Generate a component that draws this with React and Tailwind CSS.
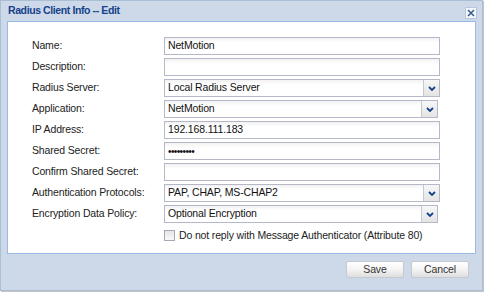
import React from "react";

const font = { fontFamily: '"Liberation Sans", Arial, sans-serif' };

const rows = [
  { label: "Name:", value: "NetMotion" },
  { label: "Description:", value: "" },
  { label: "Radius Server:", value: "Local Radius Server", select: true },
  { label: "Application:", value: "NetMotion", select: true, short: true },
  { label: "IP Address:", value: "192.168.111.183" },
  { label: "Shared Secret:", value: "•••••••••", secret: true },
  { label: "Confirm Shared Secret:", value: "" },
  { label: "Authentication Protocols:", value: "PAP, CHAP, MS-CHAP2", select: true },
  { label: "Encryption Data Policy:", value: "Optional Encryption", select: true, short: true },
];

function Chevron() {
  return (
    <svg width="8" height="5" viewBox="0 0 8 5">
      <path d="M1 1l3 3 3-3" fill="none" stroke="#15428b" strokeWidth="1.8" />
    </svg>
  );
}

function Field({ row }) {
  return (
    <div className="flex items-center h-[18px]">
      <div className="w-[132px] text-[10.5px] tracking-[-0.15px] text-[#222]">{row.label}</div>
      <div
        className={`relative h-[18px] border border-[#b5b8c8] bg-gradient-to-b from-[#f2f2f2] to-white to-[30%] flex items-center ${row.short ? "w-[274px]" : "w-[276px]"}`}
      >
        <span className={`pl-[3px] text-[#111] ${row.secret ? "text-[10px] tracking-[-0.6px] pt-[1px]" : "text-[10.5px] tracking-[-0.15px]"}`}>
          {row.value}
        </span>
        {row.select && (
          <div className="absolute right-0 top-0 h-full w-[16px] border-l border-[#c4c7d4] bg-gradient-to-b from-[#f7f7f7] to-[#e4e4e4] flex items-center justify-center">
            <Chevron />
          </div>
        )}
      </div>
    </div>
  );
}

export default function App() {
  return (
    <div className="w-[486px] h-[293px] bg-white" style={font}>
      <div className="w-[483px] h-[291px] border border-[#a9bfd6] bg-[#cdd9e8] shadow-[1px_1px_0_#c4c4c4] flex flex-col">
        <div className="h-[20px] flex items-center justify-between pl-[7px] pr-[5px]">
          <span className="text-[10.5px] tracking-[-0.4px] font-bold text-[#15428b]">Radius Client Info -- Edit</span>
          <div className="w-[12px] h-[12px] bg-[#f3f6fa] border border-[#b6c7dc] flex items-center justify-center mt-[3px]">
            <svg width="8" height="8" viewBox="0 0 8 8">
              <path d="M1 1l6 6M7 1l-6 6" stroke="#3d5d92" strokeWidth="1.6" />
            </svg>
          </div>
        </div>
        <div className="mx-[6px] h-[233px] bg-white border border-[#99bbe8] pl-[24px] pt-[15px] flex flex-col gap-[3px]">
          {rows.map((r) => (
            <Field key={r.label} row={r} />
          ))}
          <div className="flex items-center pl-[132px] mt-[2px] gap-[4px]">
            <div className="w-[11px] h-[11px] border border-[#a6a9b4] bg-gradient-to-b from-[#e6e6e6] to-[#f8f8f8]" />
            <span className="text-[10.5px] tracking-[-0.15px] text-[#222]">Do not reply with Message Authenticator (Attribute 80)</span>
          </div>
        </div>
        <div className="flex justify-end gap-[7px] pr-[13px] pt-[7px]">
          {["Save", "Cancel"].map((b) => (
            <div
              key={b}
              className="w-[58px] h-[17px] rounded-[2px] border border-[#c6c9cf] bg-gradient-to-b from-white via-[#f4f4f4] to-[#dedede] text-[10.5px] tracking-[-0.15px] text-[#333] flex items-center justify-center"
            >
              {b}
            </div>
          ))}
        </div>
      </div>
    </div>
  );
}
